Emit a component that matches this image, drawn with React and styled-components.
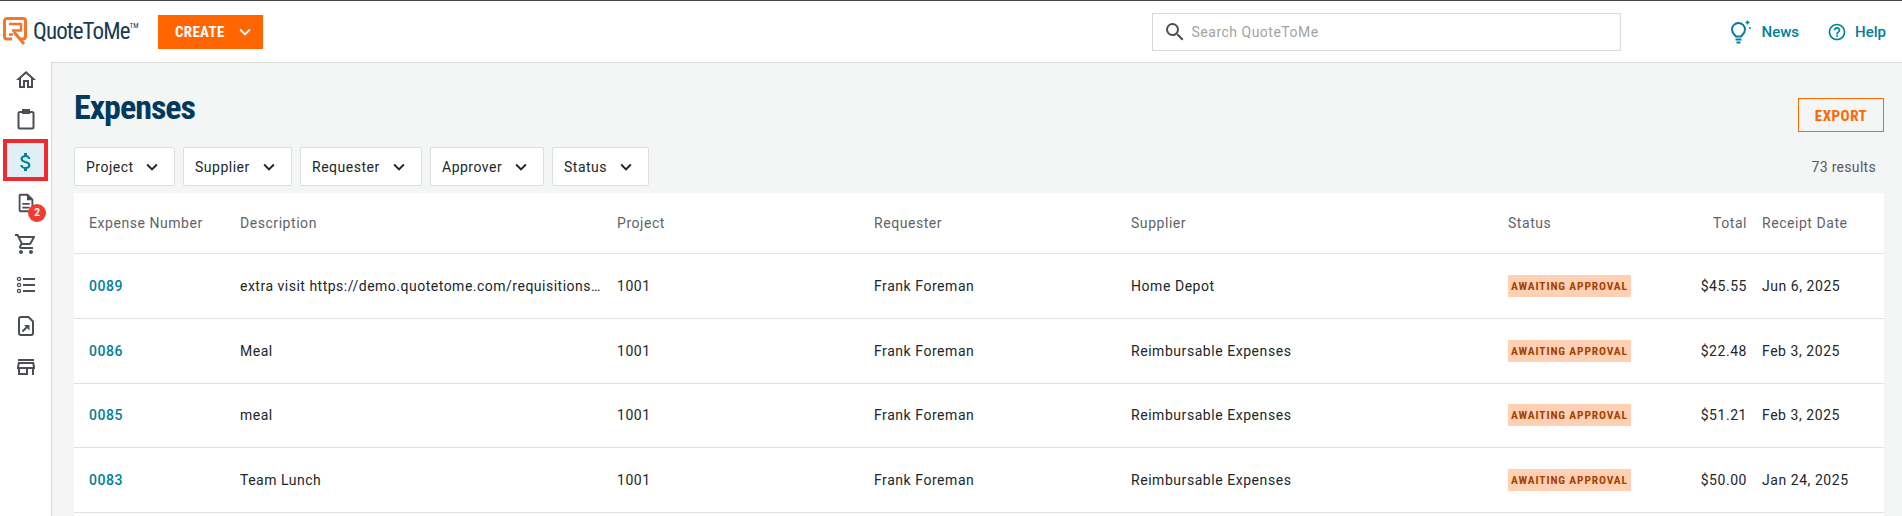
import styled, { createGlobalStyle } from "styled-components";
import {
  MdOutlineHome,
  MdAttachMoney,
  MdOutlineDescription,
  MdOutlineShoppingCart,
  MdOutlineStore,
  MdSearch,
  MdHelpOutline,
  MdKeyboardArrowDown,
} from "react-icons/md";

const condensed = `Roboto, "Liberation Sans", sans-serif`;

const GlobalStyle = createGlobalStyle`
  html, body {
    margin: 0;
    padding: 0;
    height: 100%;
    overflow: hidden;
    background: #fff;
    font-family: Roboto, "Liberation Sans", sans-serif;
  }
  * { box-sizing: border-box; }
`;

const Page = styled.div`
  display: flex;
  flex-direction: column;
  height: 516px;
  border-top: 1px solid #444;
`;

const TopBar = styled.header`
  display: flex;
  align-items: center;
  height: 61px;
  flex: none;
  padding-left: 3px;
`;

const Logo = styled.div`
  display: flex;
  align-items: center;
  width: 155px;
  gap: 6px;
`;

const LogoText = styled.span`
  font-family: ${condensed};
  font-stretch: 75%;
  font-size: 23px;
  letter-spacing: -0.9px;
  color: #1d3a52;
  sup {
    font-size: 7px;
    letter-spacing: 0;
    vertical-align: 11px;
    line-height: 0;
  }
`;

const CreateButton = styled.button`
  display: flex;
  align-items: center;
  gap: 9px;
  width: 105px;
  height: 34px;
  padding: 0 0 0 17px;
  border: 0;
  background: #ff6600;
  color: #fff;
  font-family: ${condensed};
  font-stretch: 75%;
  font-weight: 700;
  font-size: 15px;
  letter-spacing: 0.3px;
`;

const SearchBox = styled.div`
  display: flex;
  align-items: center;
  gap: 5px;
  width: 469px;
  height: 38px;
  margin-left: auto;
  padding-left: 10px;
  border: 1px solid #d9d9d9;
  background: #fff;
  color: #a3a3a3;
  font-size: 14px;
  letter-spacing: 0.5px;
  svg {
    color: #4a4f55;
  }
`;

const TopLink = styled.a`
  display: flex;
  align-items: center;
  gap: ${(p) => p.$iconGap}px;
  margin-left: ${(p) => p.$gap}px;
  color: #00809d;
  font-size: 15px;
  font-weight: 500;
  &:last-child {
    margin-right: 16px;
  }
`;

const Body = styled.div`
  display: flex;
  flex: 1;
  min-height: 0;
`;

const Sidebar = styled.nav`
  display: flex;
  flex-direction: column;
  gap: 6px;
  width: 52px;
  flex: none;
  border-right: 1px solid #d9d9d9;
`;

const NavItem = styled.div`
  position: relative;
  display: flex;
  align-items: center;
  justify-content: center;
  width: ${(p) => (p.$active ? 37 : 39)}px;
  height: ${(p) => (p.$active ? 34 : 35)}px;
  margin: ${(p) => (p.$active ? "-1px 0 2px 7px" : "0 0 0 6px")};
  padding-top: ${(p) => (p.$active ? 3 : 0)}px;
  color: ${(p) => (p.$active ? "#00809d" : "#4a4f55")};
  background: ${(p) => (p.$active ? "#e0eff3" : "transparent")};
  outline: ${(p) => (p.$active ? "4px solid #ee2a2e" : "none")};
`;

const Badge = styled.span`
  position: absolute;
  top: 19px;
  right: -1px;
  width: 18px;
  height: 18px;
  border-radius: 50%;
  background: #f23c30;
  color: #fff;
  font-size: 10px;
  font-weight: 700;
  line-height: 18px;
  text-align: center;
`;

const Main = styled.main`
  display: flex;
  flex-direction: column;
  flex: 1;
  min-width: 0;
  padding: 0 18px 0 22px;
  background: #f4f6f6;
  border-top: 1px solid #d9d9d9;
`;

const TitleRow = styled.div`
  display: flex;
  justify-content: space-between;
  align-items: flex-start;
  height: 84px;
  padding-top: 24px;
`;

const Title = styled.h1`
  margin: 0;
  font-family: ${condensed};
  font-stretch: 75%;
  font-weight: 700;
  font-size: 34px;
  line-height: 40px;
  letter-spacing: -1px;
  color: #003a5d;
`;

const ExportButton = styled.button`
  width: 86px;
  height: 34px;
  margin-top: 11px;
  padding-top: 2px;
  border: 1px solid #ff6600;
  background: transparent;
  color: #ff6600;
  font-family: ${condensed};
  font-stretch: 75%;
  font-weight: 700;
  font-size: 15px;
  letter-spacing: 0.5px;
`;

const FilterRow = styled.div`
  display: flex;
  align-items: center;
  gap: 8px;
  height: 39px;
`;

const FilterButton = styled.button`
  display: flex;
  align-items: center;
  justify-content: space-between;
  width: ${(p) => p.$width}px;
  height: 39px;
  padding: 0 11px;
  border: 1px solid #dcdfe0;
  border-radius: 2px;
  background: #fff;
  color: #22262a;
  font-family: inherit;
  font-size: 14px;
  letter-spacing: 0.5px;
`;

const Results = styled.span`
  margin-left: auto;
  margin-right: 8px;
  color: #55595e;
  font-size: 14px;
  letter-spacing: 0.3px;
`;

const Table = styled.div`
  flex: 1;
  margin-top: 7px;
  background: #fff;
`;

const Row = styled.div`
  display: grid;
  grid-template-columns: 166px 377px 257px 257px 377px 170px 69px 137px;
  align-items: center;
  height: ${(p) => (p.$head ? 61 : 64.75)}px;
  border-bottom: 1px solid #dfe1e3;
  color: ${(p) => (p.$head ? "#5f6368" : "#22262a")};
  font-size: 14px;
  letter-spacing: 0.55px;
`;

const Cell = styled.div`
  padding-left: ${(p) => (p.$first ? 15 : 0)}px;
  padding-right: ${(p) => (p.$right ? 0 : 10)}px;
  text-align: ${(p) => (p.$right ? "right" : "left")};
  white-space: nowrap;
  overflow: hidden;
  text-overflow: ellipsis;
`;

const DescriptionCell = styled(Cell)`
  padding-right: 14px;
  letter-spacing: 0.5px;
`;

const DateCell = styled(Cell)`
  padding-left: 15px;
  padding-right: 0;
`;

const NumberLink = styled.a`
  color: #00809d;
  font-weight: 500;
`;

const StatusTag = styled.span`
  display: inline-block;
  width: 123px;
  height: 22px;
  background: #ffd0b3;
  color: #a64200;
  font-family: ${condensed};
  font-stretch: 75%;
  font-weight: 700;
  font-size: 11.5px;
  line-height: 22px;
  letter-spacing: 0.85px;
  text-align: center;
`;

const LogoMark = () => (
  <svg width="24" height="29" viewBox="0 0 24 29" fill="none">
    <path
      d="M9 22H4a2.500 2.500 0 0 1-2.500-2.500V4A2.500 2.500 0 0 1 4 1.500h16A2.500 2.500 0 0 1 22.500 4v15.500A2.500 2.500 0 0 1 20 22h-3"
      stroke="#f2762e"
      strokeWidth="3"
    />
    <path d="M6 7h12v6.500H9M6 17.500h4" stroke="#f2762e" strokeWidth="2.500" />
    <path d="M11 15l10 12" stroke="#f2762e" strokeWidth="3" />
  </svg>
);

const ClipboardIcon = styled.svg`
  margin-top: -3px;
`;

const Clipboard = () => (
  <ClipboardIcon width="20" height="22" viewBox="0 0 20 22" fill="none" stroke="currentColor">
    <rect x="2.500" y="4" width="15" height="16.500" rx="1.500" strokeWidth="2" />
    <rect x="6.500" y="1.500" width="7" height="4" fill="currentColor" strokeWidth="1" />
  </ClipboardIcon>
);

const BulletList = () => (
  <svg width="22" height="20" viewBox="0 0 22 20" fill="none" stroke="currentColor">
    <circle cx="4" cy="4" r="1.600" strokeWidth="1.300" />
    <circle cx="4" cy="10" r="1.600" strokeWidth="1.300" />
    <circle cx="4" cy="16" r="1.600" strokeWidth="1.300" />
    <path d="M8 4h12M8 10h12M8 16h12" strokeWidth="2" />
  </svg>
);

const FileLink = () => (
  <svg width="20" height="22" viewBox="0 0 20 22" fill="none">
    <path
      d="M12.500 2H5a2 2 0 0 0-2 2v14a2 2 0 0 0 2 2h10a2 2 0 0 0 2-2V6.500z"
      stroke="currentColor"
      strokeWidth="2"
    />
    <path d="M6.500 16.500l5-5" stroke="currentColor" strokeWidth="2" />
    <path d="M8 10h5.500v5.500z" fill="currentColor" />
  </svg>
);

const Bulb = () => (
  <svg width="26" height="26" viewBox="0 0 26 26" fill="none" stroke="#00809d">
    <path
      d="M10 17.500c-1-1.500-4-3-4-7a6.500 6.500 0 0 1 13 0c0 4-3 5.500-4 7z"
      strokeWidth="2"
    />
    <path d="M9.500 20.500h6M10.500 23.500h4" strokeWidth="2" />
    <path d="M21.500 1.500v4M19.500 3.500h4M23 9h2" strokeWidth="1.500" />
  </svg>
);

const navItems = [
  { icon: <MdOutlineHome size={24} /> },
  { icon: <Clipboard /> },
  { icon: <MdAttachMoney size={24} />, active: true },
  { icon: <MdOutlineDescription size={22} />, badge: 2 },
  { icon: <MdOutlineShoppingCart size={24} /> },
  { icon: <BulletList /> },
  { icon: <FileLink /> },
  { icon: <MdOutlineStore size={24} /> },
];

const filters = [
  { label: "Project", width: 101 },
  { label: "Supplier", width: 109 },
  { label: "Requester", width: 122 },
  { label: "Approver", width: 114 },
  { label: "Status", width: 97 },
];

const expenses = [
  {
    number: "0089",
    description: "extra visit https://demo.quotetome.com/requisitions/new?project=1001",
    supplier: "Home Depot",
    total: "$45.55",
    date: "Jun 6, 2025",
  },
  { number: "0086", description: "Meal", supplier: "Reimbursable Expenses", total: "$22.48", date: "Feb 3, 2025" },
  { number: "0085", description: "meal", supplier: "Reimbursable Expenses", total: "$51.21", date: "Feb 3, 2025" },
  { number: "0083", description: "Team Lunch", supplier: "Reimbursable Expenses", total: "$50.00", date: "Jan 24, 2025" },
];

export default function App() {
  return (
    <Page>
      <GlobalStyle />
      <TopBar>
        <Logo>
          <LogoMark />
          <LogoText>
            QuoteToMe<sup>TM</sup>
          </LogoText>
        </Logo>
        <CreateButton>
          CREATE
          <MdKeyboardArrowDown size={22} />
        </CreateButton>
        <SearchBox>
          <MdSearch size={24} />
          Search QuoteToMe
        </SearchBox>
        <TopLink $gap={105} $iconGap={10}>
          <Bulb />
          News
        </TopLink>
        <TopLink $gap={28} $iconGap={8}>
          <MdHelpOutline size={20} />
          Help
        </TopLink>
      </TopBar>
      <Body>
        <Sidebar>
          {navItems.map((item, i) => (
            <NavItem key={i} $active={item.active}>
              {item.icon}
              {item.badge && <Badge>{item.badge}</Badge>}
            </NavItem>
          ))}
        </Sidebar>
        <Main>
          <TitleRow>
            <Title>Expenses</Title>
            <ExportButton>EXPORT</ExportButton>
          </TitleRow>
          <FilterRow>
            {filters.map((f) => (
              <FilterButton key={f.label} $width={f.width}>
                {f.label}
                <MdKeyboardArrowDown size={22} />
              </FilterButton>
            ))}
            <Results>73 results</Results>
          </FilterRow>
          <Table>
            <Row $head>
              <Cell $first>Expense Number</Cell>
              <Cell>Description</Cell>
              <Cell>Project</Cell>
              <Cell>Requester</Cell>
              <Cell>Supplier</Cell>
              <Cell>Status</Cell>
              <Cell $right>Total</Cell>
              <DateCell>Receipt Date</DateCell>
            </Row>
            {expenses.map((e) => (
              <Row key={e.number}>
                <Cell $first>
                  <NumberLink>{e.number}</NumberLink>
                </Cell>
                <DescriptionCell>{e.description}</DescriptionCell>
                <Cell>1001</Cell>
                <Cell>Frank Foreman</Cell>
                <Cell>{e.supplier}</Cell>
                <Cell>
                  <StatusTag>AWAITING APPROVAL</StatusTag>
                </Cell>
                <Cell $right>{e.total}</Cell>
                <DateCell>{e.date}</DateCell>
              </Row>
            ))}
          </Table>
        </Main>
      </Body>
    </Page>
  );
}
